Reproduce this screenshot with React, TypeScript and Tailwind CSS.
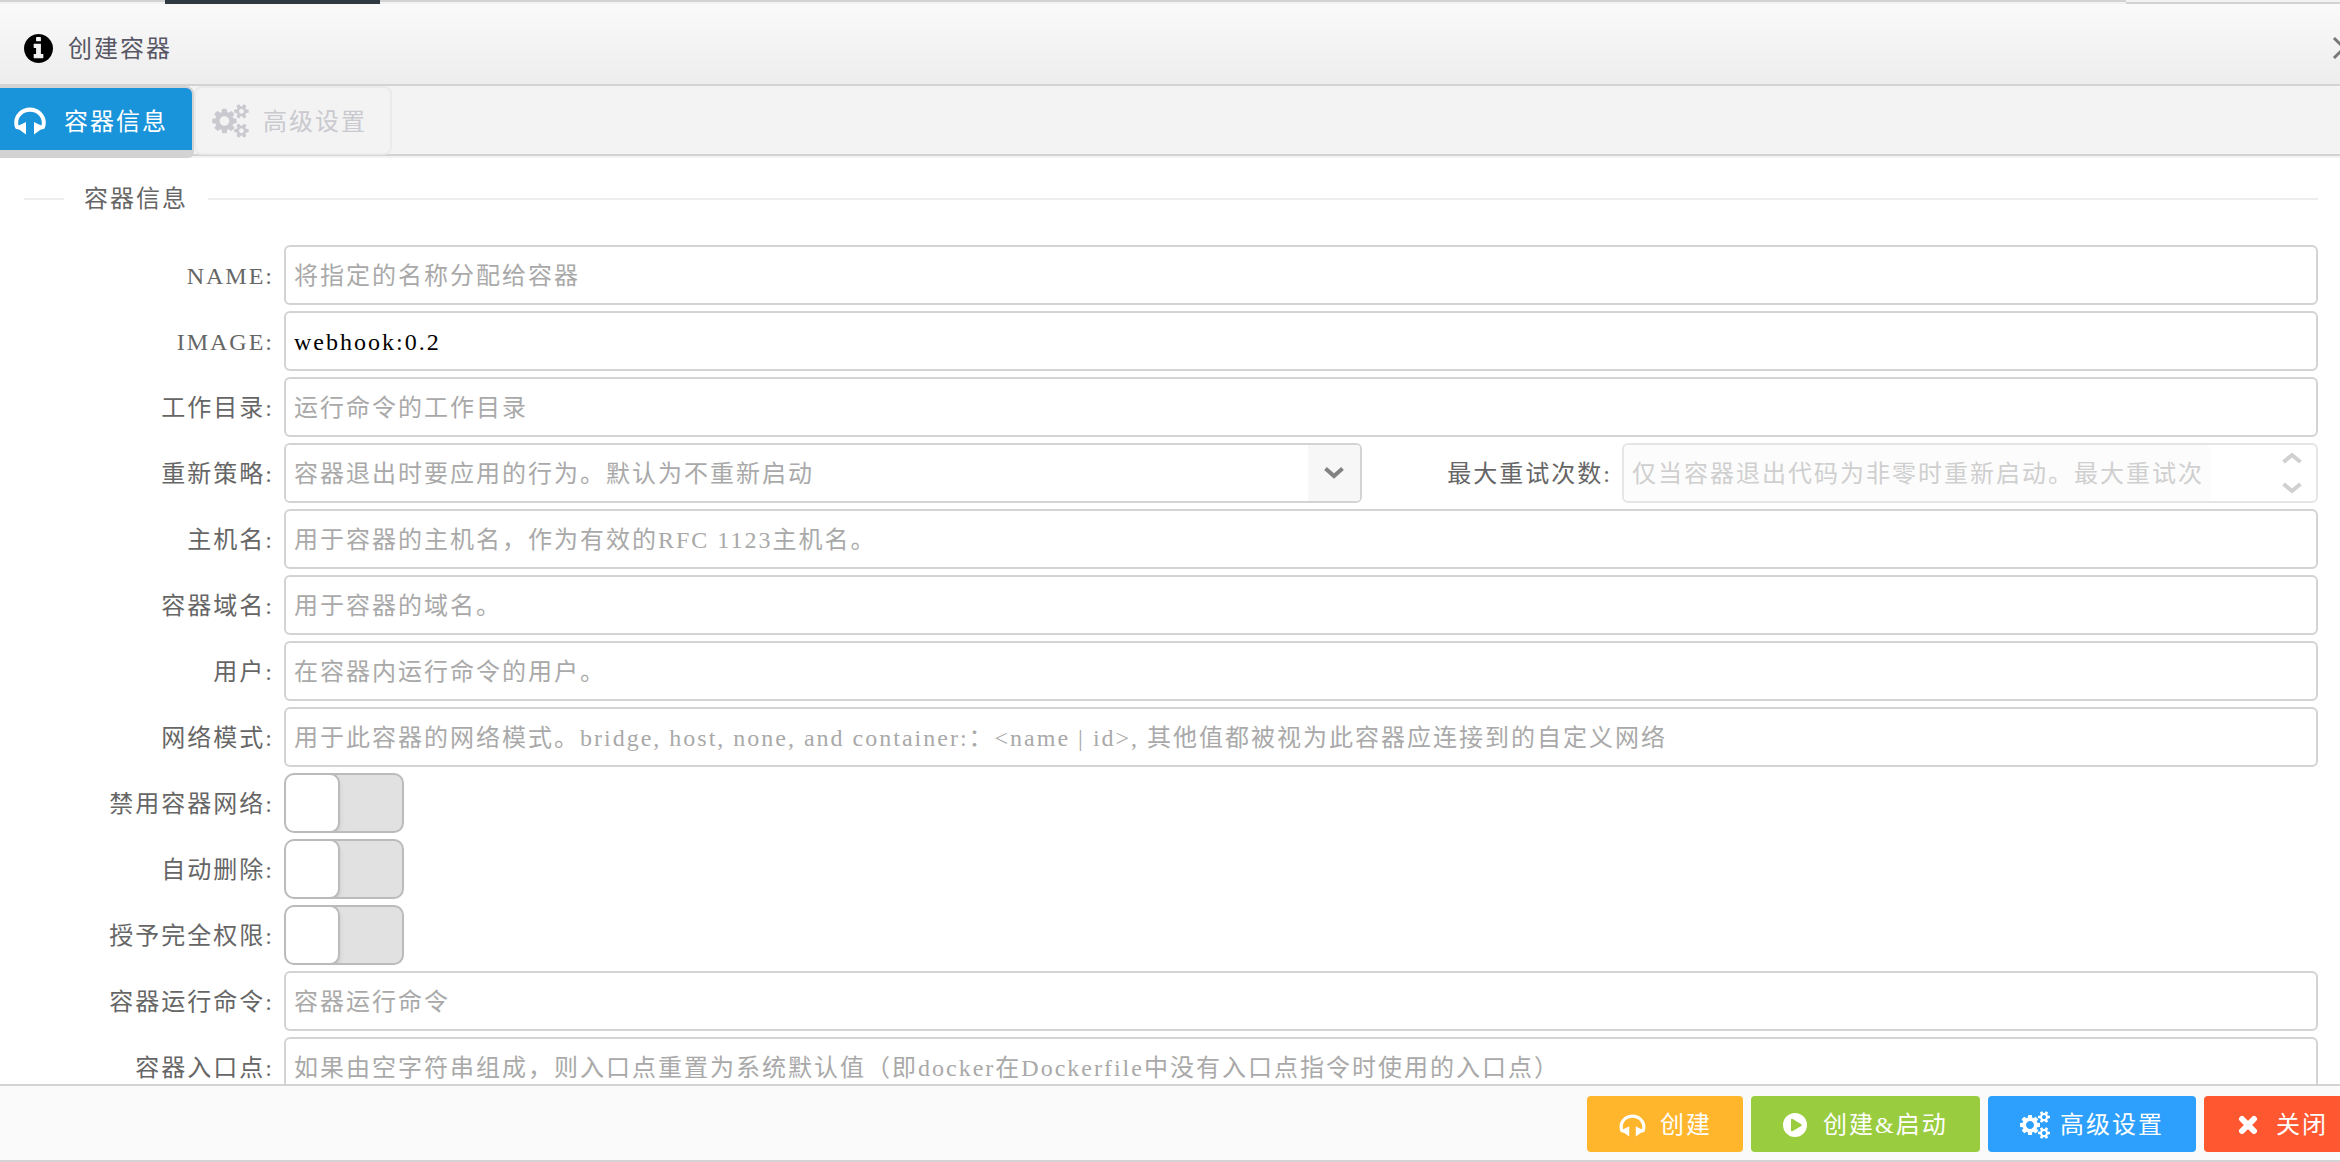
import React from "react";

const GEARS =
  "M896 896q0-106-75-181t-181-75-181 75-75 181 75 181 181 75 181-75 75-181zm768 512q0-52-38-90t-90-38-90 38-38 90q0 53 37.5 90.5t90.5 37.5 90.5-37.5 37.5-90.5zm0-1024q0-52-38-90t-90-38-90 38-38 90q0 53 37.5 90.5t90.5 37.5 90.5-37.5 37.5-90.5zm-384 421v185q0 10-7 19.5t-16 10.5l-155 24q-11 35-32 76 34 48 90 115 7 11 7 20 0 12-7 19-23 30-82.5 89.5t-78.5 59.5q-11 0-21-7l-115-90q-37 19-77 31-11 108-23 155-7 24-30 24h-186q-11 0-20-7.5t-10-17.5l-23-153q-34-10-75-31l-118 89q-7 7-20 7-11 0-21-8-144-133-144-160 0-9 7-19 10-14 41-53t47-61q-23-44-35-82l-152-24q-10-1-17-9.5t-7-19.5v-185q0-10 7-19.5t16-10.5l155-24q11-35 32-76-34-48-90-115-7-11-7-20 0-12 7-20 22-30 82-89t79-59q11 0 21 7l115 90q34-18 77-32 11-108 23-154 7-24 30-24h186q11 0 20 7.5t10 17.5l23 153q34 10 75 31l118-89q8-7 20-7 11 0 21 8 144 133 144 160 0 8-7 19-12 16-42 54t-45 60q23 48 34 82l152 23q10 2 17 10.5t7 19.5zm640 533v140q0 16-149 31-12 27-30 52 51 113 51 138 0 4-4 7-122 71-124 71-8 0-46-47t-52-68q-20 2-30 2t-30-2q-14 21-52 68t-46 47q-2 0-124-71-4-3-4-7 0-25 51-138-18-25-30-52-149-15-149-31v-140q0-16 149-31 13-29 30-52-51-113-51-138 0-4 4-7 4-2 35-20t59-34 30-16q8 0 46 46.5t52 67.5q20-2 30-2t30 2q51-71 92-112l6-2q4 0 124 70 4 3 4 7 0 25-51 138 17 23 30 52 149 15 149 31zm0-1024v140q0 16-149 31-12 27-30 52 51 113 51 138 0 4-4 7-122 71-124 71-8 0-46-47t-52-68q-20 2-30 2t-30-2q-14 21-52 68t-46 47q-2 0-124-71-4-3-4-7 0-25 51-138-18-25-30-52-149-15-149-31v-140q0-16 149-31 13-29 30-52-51-113-51-138 0-4 4-7 4-2 35-20t59-34 30-16q8 0 46 46.5t52 67.5q20-2 30-2t30 2q51-71 92-112l6-2q4 0 124 70 4 3 4 7 0 25-51 138 17 23 30 52 149 15 149 31z";

function GearsIcon({ className }: { className: string }) {
  return (
    <svg viewBox="0 0 1920 1792" className={className} fill="currentColor" aria-hidden="true">
      <path d={GEARS} />
    </svg>
  );
}

function HeadphonesIcon({ className }: { className: string }) {
  return (
    <svg viewBox="0 0 32 28" className={className} fill="currentColor" aria-hidden="true">
      <path d="M16 0.5C7.3 0.5 0.2 7.3 0.2 15.5c0 2.500.6 4.600 1.500 6.300l3.800 1 6.500 4.700V15L7.500 17.200 4.500 18.500a11 11 0 0 1-.3-3C4.200 9.500 9.400 4.700 16 4.700s11.800 4.800 11.800 10.800a11 11 0 0 1-.3 3l-3-1.300L20 15v12.500l6.500-4.700 3.800-1c.9-1.700 1.500-3.800 1.500-6.300C31.800 7.300 24.700.5 16 .5z" />
    </svg>
  );
}

function InfoIcon({ className }: { className: string }) {
  return (
    <svg viewBox="128 128 1536 1536" className={className} fill="currentColor" aria-hidden="true">
      <path d="M1152 1376v-160q0-14-9-23t-23-9h-96v-512q0-14-9-23t-23-9h-320q-14 0-23 9t-9 23v160q0 14 9 23t23 9h96v320h-96q-14 0-23 9t-9 23v160q0 14 9 23t23 9h448q14 0 23-9t9-23zm-128-896v-160q0-14-9-23t-23-9h-192q-14 0-23 9t-9 23v160q0 14 9 23t23 9h192q14 0 23-9t9-23zm640 416q0 209-103 385.500t-279.500 279.500-385.500 103-385.500-103-279.500-279.500-103-385.500 103-385.500 279.500-279.500 385.500-103 385.500 103 279.500 279.500 103 385.500z" />
    </svg>
  );
}

function PlayIcon({ className }: { className: string }) {
  return (
    <svg viewBox="0 0 24 24" className={className} aria-hidden="true">
      <path
        fill="currentColor"
        fillRule="evenodd"
        d="M12 0a12 12 0 1 0 0 24a12 12 0 0 0 0-24zM8 6.500c0-.7.700-1 1.300-.7l9 5.400c.6.400.6 1.300 0 1.700l-9 5.400c-.6.400-1.300 0-1.300-.7z"
      />
    </svg>
  );
}

function CrossIcon({ className }: { className: string }) {
  return (
    <svg
      viewBox="0 0 20 20"
      className={className}
      fill="none"
      stroke="currentColor"
      strokeWidth="6"
      strokeLinecap="round"
      aria-hidden="true"
    >
      <path d="M4 4l12 12M16 4L4 16" />
    </svg>
  );
}

function Chevron({ className, d }: { className: string; d: string }) {
  return (
    <svg viewBox="0 0 20 12" className={className} fill="none" stroke="currentColor" strokeWidth="4" aria-hidden="true">
      <path d={d} />
    </svg>
  );
}

const LABEL = "w-[250px] shrink-0 pt-0.5 text-right text-[#666]";
const FIELD =
  "h-[60px] min-w-0 flex-1 rounded-md border-2 border-[#d3d3d3] bg-white px-2 pt-0.5 text-black placeholder:text-[#a9a9a9] outline-none";

function TextRow({ id, label, placeholder, value }: { id: string; label: string; placeholder?: string; value?: string }) {
  return (
    <div className="flex items-center gap-2.5">
      <label htmlFor={id} className={LABEL}>
        {label}:
      </label>
      <input id={id} type="text" placeholder={placeholder} defaultValue={value} className={FIELD} />
    </div>
  );
}

function SwitchRow({ id, label }: { id: string; label: string }) {
  return (
    <div className="flex items-center gap-2.5">
      <label htmlFor={id} className={LABEL}>
        {label}:
      </label>
      <label className="flex h-[60px] w-[120px] cursor-pointer overflow-hidden rounded-[10px] border-2 border-[#bbb] bg-[#e1e1e1] has-checked:justify-end">
        <input id={id} type="checkbox" role="switch" className="sr-only" />
        <span className="-my-0.5 -ml-0.5 w-14 rounded-[10px] border-2 border-[#bbb] bg-white shadow-md" />
      </label>
    </div>
  );
}

export default function App() {
  return (
    <div className="flex h-screen flex-col overflow-hidden bg-white font-['Liberation_Serif','Noto_Sans_CJK_SC',serif] text-2xl leading-8 tracking-[2px]">
      <div className="flex h-1 shrink-0 bg-[#f3f3f3]">
        <div className="h-0.5 w-[165px] bg-[#d3d3d3]" />
        <div className="h-1 w-[215px] bg-[#2f3a42]" />
        <div className="h-0.5 flex-1 bg-[#d3d3d3]" />
        <div className="h-1 w-[214px] border-b-2 border-[#d3d3d3]" />
      </div>

      <header className="flex h-[82px] shrink-0 items-center border-b-2 border-[#d3d3d3] bg-linear-to-b from-[#fafafa] to-[#ededed] pt-2 pl-6">
        <InfoIcon className="size-[29px]" />
        <h1 className="ml-[15px] flex-1 pt-0.5 text-[#575765]">创建容器</h1>
        <button type="button" aria-label="关闭窗口" className="-mr-4 text-[#777]">
          <svg viewBox="0 0 24 24" className="size-6" fill="none" stroke="currentColor" strokeWidth="3">
            <path d="M2 2l20 20M22 2L2 22" />
          </svg>
        </button>
      </header>

      <div role="tablist" className="flex h-[72px] shrink-0 bg-[linear-gradient(#f3f3f3_68px,#d3d3d3_68px,#d3d3d3_70px,#f3f3f3_70px)]">
        <button
          type="button"
          role="tab"
          aria-selected="true"
          className="flex w-[194px] items-center rounded-tr-lg rounded-br-md border-t-2 border-r-2 border-b-8 border-[#d3d3d3] bg-[#1993d9] pt-1 pl-3.5 text-white"
        >
          <HeadphonesIcon className="h-7 w-8" />
          <span className="ml-[18px] pt-0.5 whitespace-nowrap">容器信息</span>
        </button>
        <button
          type="button"
          role="tab"
          aria-selected="false"
          disabled
          className="flex h-[69px] w-[198px] items-center rounded-lg border-2 border-[#eaeaea] bg-[#f3f3f3] pl-4 text-[#c9c9cf]"
        >
          <GearsIcon className="h-[34px] w-[37px]" />
          <span className="ml-3.5 pt-0.5 whitespace-nowrap">高级设置</span>
        </button>
      </div>

      <main className="min-h-0 flex-1 overflow-hidden pr-[22px] pl-6">
        <div className="flex items-center gap-5 pt-[25px] text-[#666]">
          <span className="h-0.5 w-10 bg-[#eee]" />
          <h2>容器信息</h2>
          <span className="h-0.5 flex-1 bg-[#eee]" />
        </div>

        <form id="container-form" className="flex flex-col gap-1.5 pt-[30px]">
          <TextRow id="name" label="NAME" placeholder="将指定的名称分配给容器" />
          <TextRow id="image" label="IMAGE" value="webhook:0.2" />
          <TextRow id="workdir" label="工作目录" placeholder="运行命令的工作目录" />
          <div className="flex items-center">
            <div className="flex min-w-0 flex-[1338] items-center gap-2.5">
              <label htmlFor="restart" className={LABEL}>
                重新策略:
              </label>
              <div className="grid h-[60px] min-w-0 flex-1 grid-cols-[1fr_52px] overflow-hidden rounded-md border-2 border-[#d3d3d3]">
                <select id="restart" className="col-span-2 col-start-1 row-start-1 appearance-none bg-white px-2 pt-0.5 text-[#a9a9a9] outline-none">
                  <option>容器退出时要应用的行为。默认为不重新启动</option>
                </select>
                <span className="pointer-events-none col-start-2 row-start-1 flex items-center justify-center bg-[#f7f7f7] text-[#828282]">
                  <Chevron className="h-3 w-5" d="M1.500 1.500L10 9l8.500-7.500" />
                </span>
              </div>
            </div>
            <div className="flex min-w-0 flex-[956] items-center gap-2.5">
              <label htmlFor="retries" className={LABEL}>
                最大重试次数:
              </label>
              <div className="flex h-[60px] min-w-0 flex-1 items-center rounded-md border-2 border-[#e5e5e5]">
                <input
                  id="retries"
                  type="text"
                  disabled
                  placeholder="仅当容器退出代码为非零时重新启动。最大重试次"
                  className="h-full min-w-0 flex-1 rounded-md bg-[#fcfcfc] px-2 pt-0.5 placeholder:text-[#cfcfcf]"
                />
                <div className="flex w-[105px] flex-col items-end gap-[18px] pr-3.5 text-[#d0d0d0]">
                  <button type="button" disabled aria-label="增加" className="flex">
                    <Chevron className="h-3 w-5" d="M1.500 10L10 3l8.500 7" />
                  </button>
                  <button type="button" disabled aria-label="减少" className="flex">
                    <Chevron className="h-3 w-5" d="M1.500 2L10 9l8.500-7" />
                  </button>
                </div>
              </div>
            </div>
          </div>
          <TextRow id="hostname" label="主机名" placeholder="用于容器的主机名，作为有效的RFC 1123主机名。" />
          <TextRow id="domain" label="容器域名" placeholder="用于容器的域名。" />
          <TextRow id="user" label="用户" placeholder="在容器内运行命令的用户。" />
          <TextRow
            id="network"
            label="网络模式"
            placeholder="用于此容器的网络模式。bridge, host, none, and container:：<name | id>, 其他值都被视为此容器应连接到的自定义网络"
          />
          <SwitchRow id="disable-network" label="禁用容器网络" />
          <SwitchRow id="auto-remove" label="自动删除" />
          <SwitchRow id="privileged" label="授予完全权限" />
          <TextRow id="command" label="容器运行命令" placeholder="容器运行命令" />
          <TextRow
            id="entrypoint"
            label="容器入口点"
            placeholder="如果由空字符串组成，则入口点重置为系统默认值（即docker在Dockerfile中没有入口点指令时使用的入口点）"
          />
        </form>
      </main>

      <footer className="flex h-[78px] shrink-0 items-center justify-end gap-2 border-y-2 border-[#d3d3d3] bg-[#fafafa] pt-0.5 text-white">
        <button type="button" className="flex h-14 w-[156px] items-center rounded-sm bg-[#ffb62c] pt-0.5 pl-8">
          <HeadphonesIcon className="h-[23px] w-[27px]" />
          <span className="ml-3.5 whitespace-nowrap">创建</span>
        </button>
        <button type="button" className="flex h-14 w-[229px] items-center rounded-sm bg-[#9acc3f] pt-0.5 pl-8">
          <PlayIcon className="size-6" />
          <span className="ml-4 whitespace-nowrap">创建&amp;启动</span>
        </button>
        <button type="button" className="flex h-14 w-[208px] items-center rounded-sm bg-[#2d9ffc] pt-0.5 pl-8">
          <GearsIcon className="h-7 w-[30px]" />
          <span className="ml-2.5 whitespace-nowrap">高级设置</span>
        </button>
        <button type="button" className="-mr-5 flex h-14 w-[156px] items-center rounded-sm bg-[#ff5830] pt-0.5 pl-[34px]">
          <CrossIcon className="size-5" />
          <span className="ml-[18px] whitespace-nowrap">关闭</span>
        </button>
      </footer>
    </div>
  );
}
